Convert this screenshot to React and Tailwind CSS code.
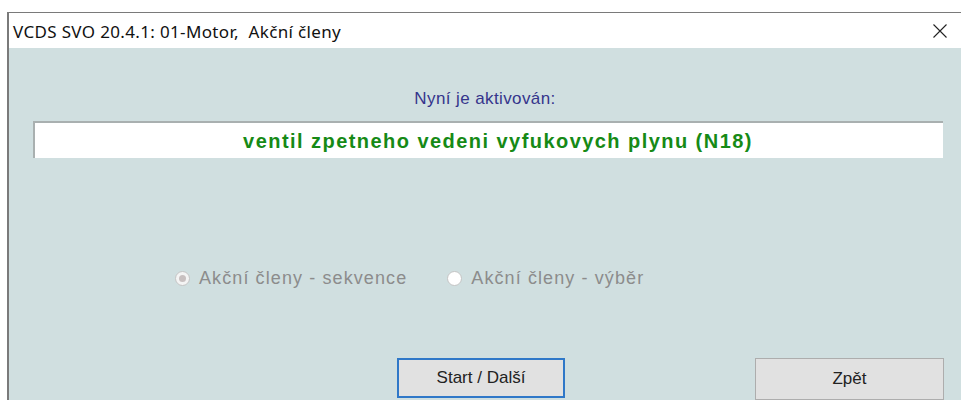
export default function App() {
  return (
    <div className="h-[400px] w-[961px] overflow-hidden bg-white pl-[7px] pt-[12px]">
      <div className="flex h-[388px] flex-col border-l-2 border-t border-[#7a7a7a]">
        {/* Title bar */}
        <div className="flex h-[41px] items-center justify-between bg-white pl-[4px] pr-[14px] pt-[2px]" style={{ fontFamily: '"Noto Sans", sans-serif' }}>
          <span className="text-[17px] tracking-[0.35px] text-[#111]">VCDS SVO 20.4.1: 01-Motor,&nbsp; Akční členy</span>
          <svg width="14" height="14" viewBox="0 0 14 14" className="text-[#222]">
            <path d="M0.5 0.5 L13.5 13.5 M13.5 0.5 L0.5 13.5" stroke="currentColor" strokeWidth="1.1" fill="none" />
          </svg>
        </div>

        {/* Dialog body */}
        <div className="flex flex-1 flex-col bg-[#d0dfe0] font-['Liberation_Sans',Arial,sans-serif]">
          <div className="mt-[38px] text-center text-[17px] tracking-[0.4px] text-[#35358c]">Nyní je aktivován:</div>

          <div className="ml-[24px] mr-[18px] mt-[10px] flex h-[37px] items-center justify-center border-l-2 border-t-2 border-[#a9b0b0] bg-white pl-[18px]">
            <span className="text-[20px] font-bold tracking-[1.45px] text-[#168a16]">ventil zpetneho vedeni vyfukovych plynu (N18)</span>
          </div>

          {/* Mode selection */}
          <div className="mt-[107px] flex items-center pl-[166px] text-[18px] tracking-[1.1px] text-[#8c8c8c]">
            <label className="flex items-center gap-[9px]">
              <span className="flex h-[15px] w-[15px] items-center justify-center rounded-full border border-[#c4c4c4] bg-[#f4f4f4]">
                <span className="h-[7px] w-[7px] rounded-full bg-[#c8c0c0]" />
              </span>
              Akční členy - sekvence
            </label>
            <label className="ml-[40px] flex items-center gap-[9px]">
              <span className="h-[15px] w-[15px] rounded-full border border-[#c4c4c4] bg-white" />
              Akční členy - výběr
            </label>
          </div>

          {/* Buttons */}
          <div className="mt-[66px] flex items-start">
            <button className="ml-[388px] flex h-[40px] w-[168px] items-center justify-center border-2 border-[#2f78c8] bg-[#e1e1e1] text-[17px] text-[#222]">
              Start / Další
            </button>
            <button className="ml-[190px] flex h-[42px] w-[189px] items-center justify-center border border-[#adadad] bg-[#e1e1e1] text-[17px] text-[#222]">
              Zpět
            </button>
          </div>
        </div>
      </div>
    </div>
  );
}
